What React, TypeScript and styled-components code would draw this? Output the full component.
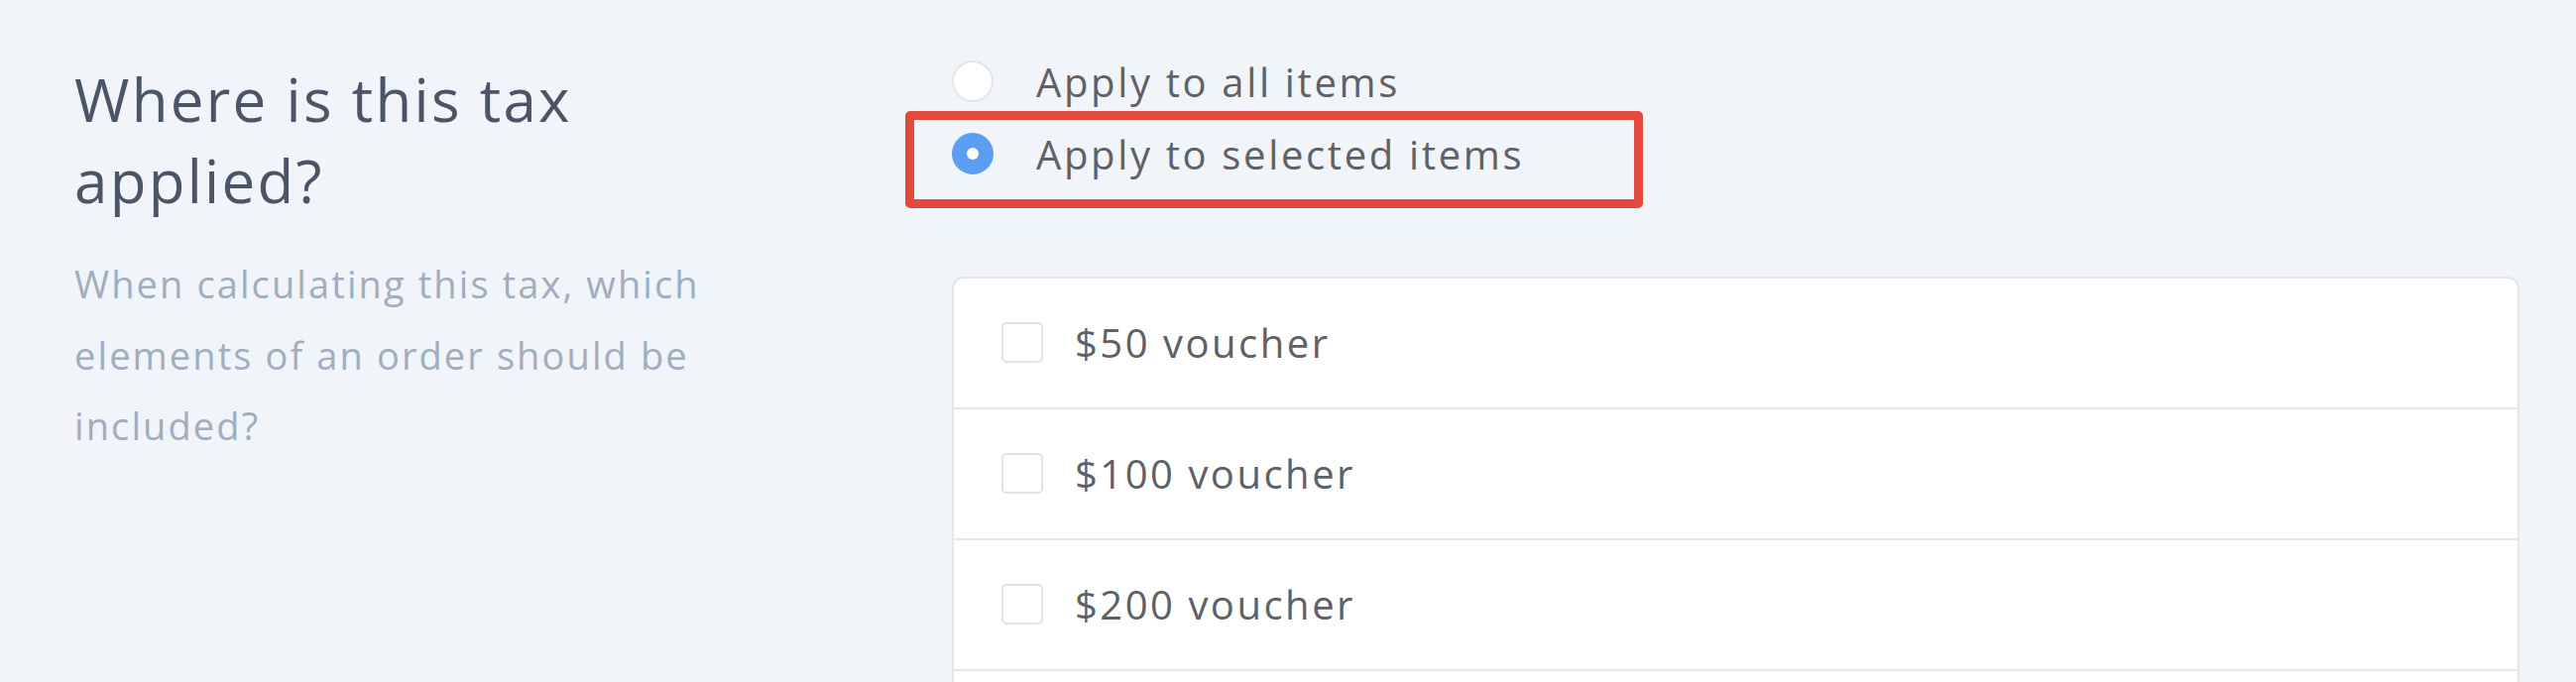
import React from "react";
import styled, { createGlobalStyle } from "styled-components";

const GlobalStyle = createGlobalStyle`
  html, body {
    margin: 0;
    background: #f1f4f9;
    overflow: hidden;
  }
  *, *::before, *::after { box-sizing: border-box; }
`;

const Page = styled.div`
  display: flex;
  gap: 185px;
  padding: 0 57px 0 75px;
  height: 688px;
  font-family: "Open Sans", "Noto Sans", sans-serif;
`;

const Aside = styled.div`
  width: 700px;
  flex-shrink: 0;
  padding-top: 59px;
`;

const Title = styled.h2`
  margin: 0;
  font-size: 60px;
  line-height: 82px;
  font-weight: 400;
  letter-spacing: 2.3px;
  color: #4a5568;
`;

const Hint = styled.p`
  margin: 28px 0 0;
  font-size: 38px;
  line-height: 71.5px;
  letter-spacing: 2.1px;
  color: #a0aec0;
`;

const Main = styled.div`
  flex: 1;
  padding-top: 60px;
`;

const RadioGroup = styled.div`
  display: flex;
  flex-direction: column;
  gap: 29px;
`;

const RadioRow = styled.label<{ $marked?: boolean }>`
  position: relative;
  display: flex;
  align-items: center;
  gap: 43px;
  height: 44px;
  font-size: 40px;
  letter-spacing: 2.65px;
  color: #5f6166;

  ${(p) =>
    p.$marked &&
    `
    &::after {
      content: "";
      position: absolute;
      left: -47px;
      top: -21px;
      width: 744px;
      height: 98px;
      border: 9px solid #e5493c;
      border-radius: 5px;
    }
  `}
`;

const Radio = styled.span<{ $on?: boolean }>`
  width: 42px;
  height: 42px;
  border-radius: 50%;
  flex-shrink: 0;
  background: ${(p) => (p.$on ? "#5c9ef2" : "#fff")};
  border: 2px solid ${(p) => (p.$on ? "#5c9ef2" : "#e2e5e9")};
  display: flex;
  align-items: center;
  justify-content: center;

  &::before {
    content: "";
    width: 12px;
    height: 12px;
    border-radius: 50%;
    background: #fff;
    display: ${(p) => (p.$on ? "block" : "none")};
  }
`;

const Card = styled.div`
  margin-top: 102px;
  padding-bottom: 60px;
  background: #fff;
  border: 2px solid #e3e6ea;
  border-radius: 12px;
  overflow: hidden;
`;

const Item = styled.div`
  display: flex;
  align-items: center;
  gap: 32px;
  height: 132px;
  padding-left: 48px;
  padding-bottom: 2px;
  border-bottom: 2px solid #e5e8ec;
  font-size: 40px;
  letter-spacing: 2.5px;
  color: #5f6166;
`;

const Check = styled.span`
  width: 42px;
  height: 41px;
  flex-shrink: 0;
  border: 2px solid #e0e3e7;
  border-radius: 5px;
  background: #fff;
`;

const items = ["$50 voucher", "$100 voucher", "$200 voucher"];

export default function App() {
  return (
    <>
      <GlobalStyle />
      <Page>
        <Aside>
          <Title>Where is this tax applied?</Title>
          <Hint>When calculating this tax, which elements of an order should be included?</Hint>
        </Aside>
        <Main>
          <RadioGroup>
            <RadioRow>
              <Radio />
              Apply to all items
            </RadioRow>
            <RadioRow $marked>
              <Radio $on />
              Apply to selected items
            </RadioRow>
          </RadioGroup>
          <Card>
            {items.map((t) => (
              <Item key={t}>
                <Check />
                {t}
              </Item>
            ))}
          </Card>
        </Main>
      </Page>
    </>
  );
}
